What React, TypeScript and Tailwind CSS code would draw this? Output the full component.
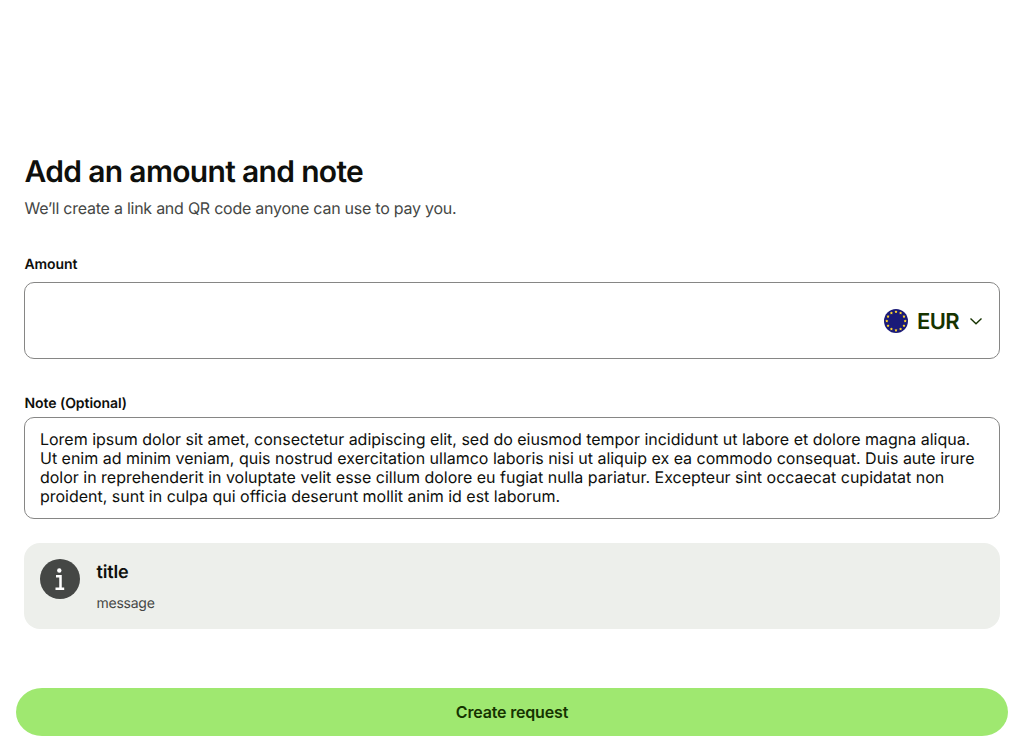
import React from "react";

const STARS = Array.from({ length: 12 }, (_, i) => {
  const a = (i * Math.PI) / 6;
  return { x: 12 + 9.2 * Math.sin(a), y: 12 - 9.2 * Math.cos(a) };
});

function EuroFlag() {
  return (
    <svg className="size-6 shrink-0" viewBox="0 0 24 24">
      <circle cx="12" cy="12" r="12" fill="#1a1a78" />
      {STARS.map((s, i) => (
        <path
          key={i}
          transform={`translate(${s.x} ${s.y}) scale(1.3)`}
          d="M0-1.1.35-.55 1.1-.42.65.19.78 1 0 .75-.78 1-.65.19-1.1-.42-.35-.55Z"
          fill="#ffd52c"
        />
      ))}
    </svg>
  );
}

export default function App() {
  return (
    <div className="flex h-[748px] flex-col bg-white pt-[152px] font-['Inter',sans-serif] text-[#0e0f0c] [text-rendering:geometricPrecision]">
      <main className="flex flex-col px-6">
        <h1 className="h-10 pl-[0.5px] text-[30px] leading-10 font-semibold tracking-[-0.67px]">Add an amount and note</h1>
        <p className="mt-1 h-6 pl-[0.5px] text-base leading-6 tracking-[-0.246px] text-[#454745]">
          We’ll create a link and QR code anyone can use to pay you.
        </p>
        <label className="mt-[34px] h-[22px] pl-[0.5px] text-sm leading-[22px] font-semibold tracking-[-0.1px]">Amount</label>
        <div className="mt-[6px] flex h-[77px] items-center justify-end rounded-[10px] border border-[#868685] pr-[15px]">
          <EuroFlag />
          <span className="ml-[9px] pt-0.5 text-[22px] leading-7 font-semibold tracking-[-0.6px] text-[#163300]">EUR</span>
          <svg className="ml-[9px] size-4" viewBox="0 0 16 16" fill="none" stroke="#163300" strokeWidth="1.4">
            <path d="m2.5 5.5 5.5 5.2 5.5-5.2" />
          </svg>
        </div>
        <label className="mt-[34px] h-[22px] pl-[0.5px] text-sm leading-[22px] font-semibold tracking-[-0.06px]">Note (Optional)</label>
        <div className="mt-0.5 h-[102px] rounded-[10px] border border-[#868685] px-[15px] pt-3 text-base leading-[19px] tracking-[-0.013px]">
          Lorem ipsum dolor sit amet, consectetur adipiscing elit, sed do eiusmod tempor incididunt ut labore et dolore magna aliqua. Ut enim ad minim veniam, quis nostrud exercitation ullamco laboris nisi ut aliquip ex ea commodo consequat. Duis aute irure dolor in reprehenderit in voluptate velit esse cillum dolore eu fugiat nulla pariatur. Excepteur sint occaecat cupidatat non proident, sunt in culpa qui officia deserunt mollit anim id est laborum.
        </div>
        <section className="mt-6 flex h-[86px] gap-4 rounded-2xl bg-[#edefeb] p-4">
          <svg className="size-10 shrink-0" viewBox="0 0 40 40">
            <circle cx="20" cy="20" r="20" fill="#454745" />
            <circle cx="19.3" cy="11.5" r="2.2" fill="#fff" />
            <path d="M16 17.2h4.5v12.5M15.5 29.7h8.7" fill="none" stroke="#fff" strokeWidth="2.5" />
          </svg>
          <div className="flex flex-col pt-0.5 pl-[0.5px]">
            <h2 className="h-6 text-lg leading-6 font-semibold tracking-[-0.18px]">title</h2>
            <p className="mt-2 text-sm leading-[22px] tracking-[-0.25px] text-[#454745]">message</p>
          </div>
        </section>
      </main>
      <button className="mx-4 mt-[59px] h-12 rounded-[26px/24px] bg-[#9fe870] text-base font-semibold tracking-[-0.176px] text-[#163300]">
        Create request
      </button>
    </div>
  );
}
